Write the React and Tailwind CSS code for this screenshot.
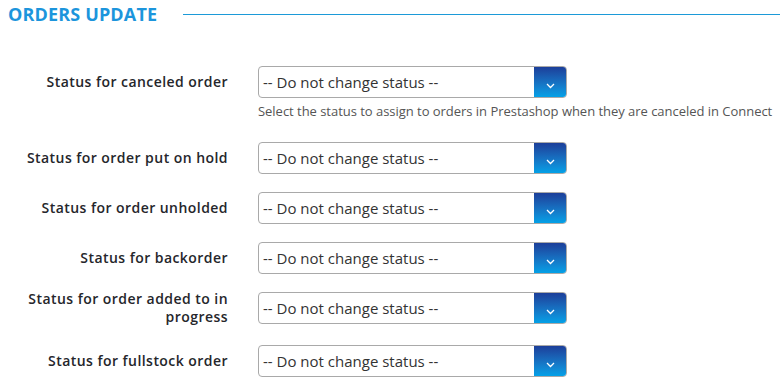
import React from "react";

const rows = [
  { label: ["Status for canceled order"], help: "Select the status to assign to orders in Prestashop when they are canceled in Connect", mb: "mb-[23px]" },
  { label: ["Status for order put on hold"], mb: "mb-[18px]" },
  { label: ["Status for order unholded"], mb: "mb-[18px]" },
  { label: ["Status for backorder"], mb: "mb-[16px]" },
  { label: ["Status for order added to in", "progress"], mb: "mb-[19px]" },
  { label: ["Status for fullstock order"], mb: "mb-[18px]" },
];

function Select() {
  return (
    <div className="flex h-[32px] w-[309px] rounded-[4px] border border-[#a9a9a9] bg-white overflow-hidden">
      <div className="flex flex-1 items-center pl-[4px] text-[15px] text-[#333]">
        -- Do not change status --
      </div>
      <div className="flex w-[33px] items-end justify-center pb-[9px] bg-gradient-to-b from-[#1c3b97] to-[#00a4ea] -my-px -mr-px rounded-r-[4px]">
        <svg width="9" height="6" viewBox="0 0 9 6" fill="none">
          <path d="M1 1l3.5 3.5L8 1" stroke="white" strokeWidth="1.3" />
        </svg>
      </div>
    </div>
  );
}

export default function App() {
  return (
    <div className="w-[780px] h-[388px] bg-white overflow-hidden" style={{ fontFamily: "'Open Sans', 'Liberation Sans', sans-serif" }}>
      <div className="flex items-center pt-[3px] pl-[8px]">
        <div className="text-[18px] font-bold text-[#1c95dc] leading-[22px] tracking-[0.15px]">ORDERS UPDATE</div>
        <div className="ml-[26px] flex-1 h-px bg-[#1c9ad8]" />
      </div>
      <div className="mt-[41px] flex flex-col">
        {rows.map((r, i) => (
          <div key={i} className={r.mb}>
            <div className="flex items-center">
              <div className="w-[228px] shrink-0 text-right text-[14px] font-semibold leading-[18px] text-[#25262b] tracking-[0.45px] whitespace-nowrap">
                {r.label.map((l, j) => (
                  <div key={j}>{l}</div>
                ))}
              </div>
              <div className="ml-[30px]">
                <Select />
              </div>
            </div>
            {r.help && (
              <div className="ml-[258px] mt-[5px] text-[13px] leading-[16px] text-[#555] whitespace-nowrap tracking-[-0.03px]">{r.help}</div>
            )}
          </div>
        ))}
      </div>
    </div>
  );
}
